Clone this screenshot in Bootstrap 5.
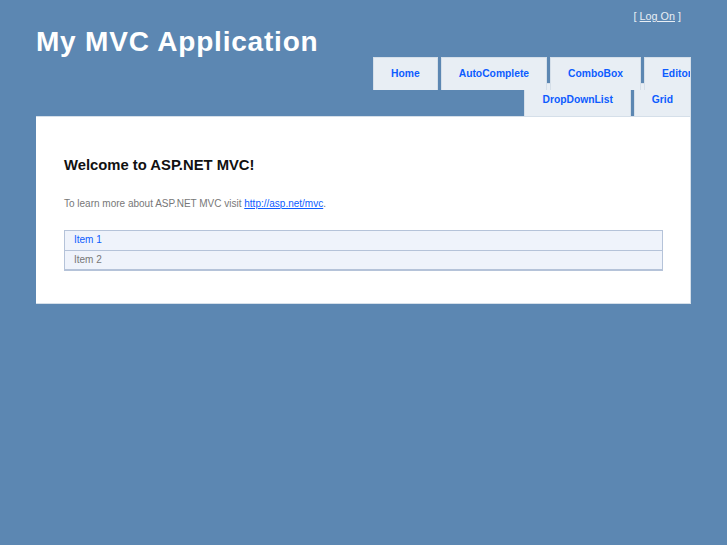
<!DOCTYPE html>
<html lang="en">
<head>
    <meta charset="UTF-8">
    <meta name="viewport" content="width=device-width, initial-scale=1.0">
    <title>My MVC Application</title>
    <link href="https://cdn.jsdelivr.net/npm/bootstrap@5.3.3/dist/css/bootstrap.min.css" rel="stylesheet" crossorigin="anonymous">
    <style>
        body {
            background-color: #5c87b2;
            font-family: "Liberation Sans", Arial, sans-serif;
            font-size: 10px;
            color: #777;
            min-height: 100vh;
        }

        #page {
            width: 655px;
            margin-left: 36px;
        }

        #header {
            height: 57px;
        }

        #title {
            font-size: 28px;
            font-weight: 700;
            line-height: 34px;
            letter-spacing: .8px;
            color: #fff;
            margin: 25px 0 0;
        }

        #logindisplay {
            color: #e8eef4;
            font-size: 10.8px;
            padding-top: 10px;
            padding-right: 10px;
            line-height: 13px;
        }

        #logindisplay a {
            color: #e8eef4;
        }

        .menu-row {
            gap: 3px;
            height: 33px;
            line-height: 31px;
        }

        .menu-row a {
            flex: none;
            display: block;
            background-color: #e8eef4;
            border: 1px solid #d5dfe9;
            border-bottom: 0;
            color: #0d5cff;
            font-weight: 700;
            font-size: 10.3px;
            text-decoration: none;
            padding: 0 17px;
        }

        /* first row sits on top of the second one, which starts 7px higher */
        .row-one {
            position: relative;
            z-index: 1;
        }

        .row-two {
            margin-top: -7px;
        }

        .menu-cut {
            width: 47px;
            padding-right: 0 !important;
            overflow: hidden;
        }

        #main {
            background-color: #fff;
            border: 1px solid #d5dfe9;
            border-left: 0;
            height: 188px;
            padding: 39px 27px 0 28px;
        }

        #main h2 {
            font-size: 14.8px;
            font-weight: 700;
            line-height: 18px;
            color: #111;
            margin: 0 0 23px;
        }

        #main p {
            line-height: 13px;
            margin: 0 0 20px;
        }

        #main p a {
            color: #0d5cff;
        }

        .item-list {
            border-radius: 0;
        }

        .item-list .list-group-item {
            background-color: #eff3fb;
            border: 1px solid #b5c3d9;
            border-bottom-width: 0;
            border-radius: 0;
            color: #777;
            height: 20px;
            line-height: 18px;
            padding: 0 9px;
        }

        .item-list .list-group-item:last-child {
            border-bottom-width: 2px;
            height: 21px;
        }

        .item-list a.list-group-item {
            color: #0d5cff;
        }
    </style>
</head>
<body>

    <div id="page">
        <div id="header" class="d-flex justify-content-between align-items-start">
            <h1 id="title">My MVC Application</h1>
            <div id="logindisplay">[ <a href="#">Log On</a> ]</div>
        </div>

        <div class="menu-row row-one d-flex justify-content-end">
            <a href="#">Home</a>
            <a href="#">AutoComplete</a>
            <a href="#">ComboBox</a>
            <a href="#" class="menu-cut">Editor</a>
        </div>
        <div class="menu-row row-two d-flex justify-content-end">
            <a href="#">DropDownList</a>
            <a href="#">Grid</a>
        </div>

        <div id="main">
            <h2>Welcome to ASP.NET MVC!</h2>
            <p>To learn more about ASP.NET MVC visit <a href="#">http://asp.net/mvc</a>.</p>
            <div class="list-group item-list">
                <a href="#" class="list-group-item">Item 1</a>
                <div class="list-group-item">Item 2</div>
            </div>
        </div>
    </div>

    <script src="https://cdn.jsdelivr.net/npm/bootstrap@5.3.3/dist/js/bootstrap.bundle.min.js" crossorigin="anonymous"></script>
</body>
</html>
